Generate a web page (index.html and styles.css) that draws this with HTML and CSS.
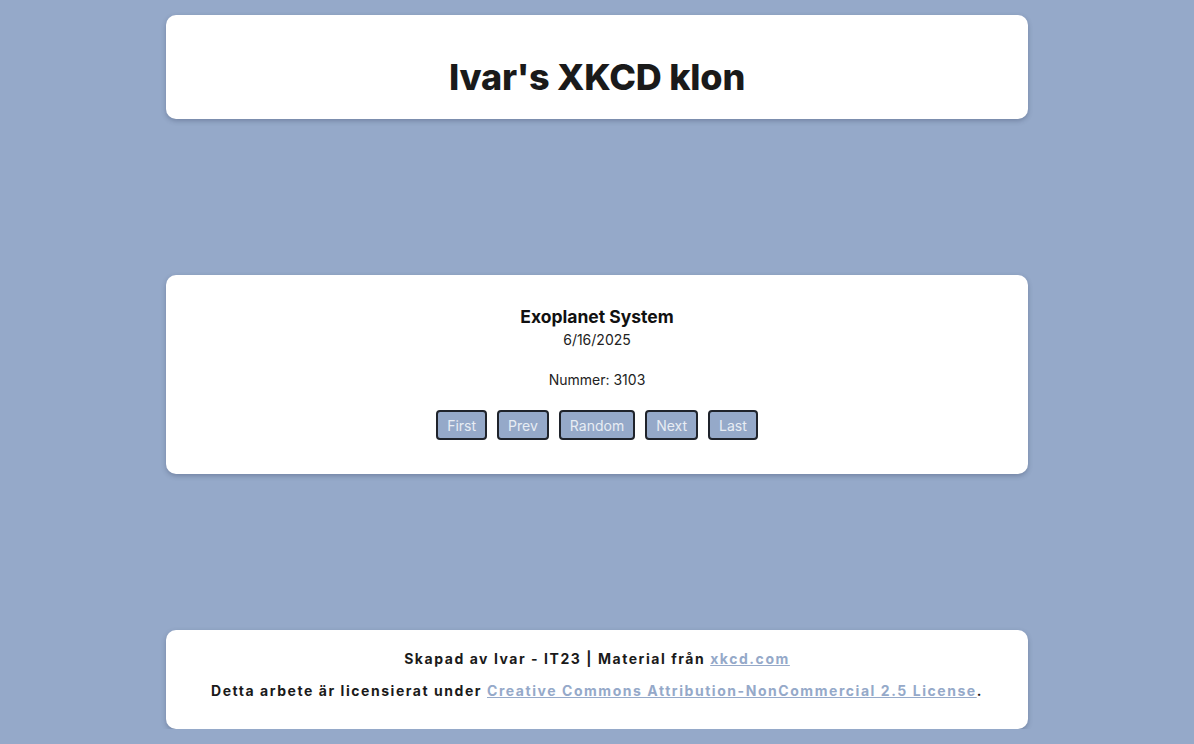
FILE: index.html
```html
<!DOCTYPE html>
<html lang="sv">
<head>
<meta charset="utf-8">
<title>Ivar's XKCD klon</title>
<link rel="stylesheet" href="styles.css">
</head>
<body>
<div class="page">
  <header class="card header">
    <h1 class="title">Ivar's XKCD klon</h1>
  </header>
  <main class="card comic">
    <h2 class="comic-title">Exoplanet System</h2>
    <p class="comic-date">6/16/2025</p>
    <p class="comic-num">Nummer: 3103</p>
    <div class="nav">
      <button class="btn">First</button>
      <button class="btn">Prev</button>
      <button class="btn">Random</button>
      <button class="btn">Next</button>
      <button class="btn">Last</button>
    </div>
  </main>
  <footer class="card footer">
    <p class="foot-line">Skapad av Ivar - IT23 | Material från <a href="#" class="link">xkcd.com</a></p>
    <p class="foot-line">Detta arbete är licensierat under <a href="#" class="link">Creative Commons Attribution-NonCommercial 2.5 License</a>.</p>
  </footer>
</div>
</body>
</html>
```

FILE: styles.css
```css
html, body {
  margin: 0;
  padding: 0;
}
body {
  background: #95a9c9;
  font-family: Inter, "Noto Sans", sans-serif;
  color: #111;
}
.page {
  width: 862px;
  margin: 0 auto;
  padding-top: 15px;
  display: flex;
  flex-direction: column;
  gap: 156px;
}
.card {
  background: #fff;
  border-radius: 10px;
  box-shadow: 0 2px 5px rgba(40, 50, 80, 0.3);
}
.header {
  height: 104px;
  display: flex;
  align-items: center;
  justify-content: center;
}
.title {
  margin: 0;
  padding-top: 20px;
  font-size: 36px;
  font-weight: 800;
  letter-spacing: -0.2px;
  color: #1a1a1a;
}
.comic {
  height: 199px;
  box-sizing: border-box;
  padding-top: 31px;
  display: flex;
  flex-direction: column;
  align-items: center;
}
.comic-title {
  margin: 0;
  font-size: 17.5px;
  font-weight: 700;
  line-height: 21px;
}
.comic-date {
  margin: 4px 0 0;
  font-size: 14px;
  line-height: 18px;
  color: #222;
}
.comic-num {
  margin: 22px 0 0;
  font-size: 14px;
  line-height: 18px;
  color: #222;
}
.nav {
  margin-top: 21px;
  display: flex;
  gap: 10px;
}
.btn {
  height: 30px;
  padding: 0 9px;
  background: #95a9c9;
  border: 2px solid #1f232b;
  border-radius: 4px;
  color: #e8edf4;
  font-family: Inter, "Noto Sans", sans-serif;
  font-size: 14px;
}
.footer {
  height: 99px;
  box-sizing: border-box;
  padding-top: 19px;
  display: flex;
  flex-direction: column;
  align-items: center;
  gap: 13px;
}
.foot-line {
  margin: 0;
  font-size: 14px;
  font-weight: 700;
  letter-spacing: 1.55px;
  line-height: 19px;
  color: #1a1a1a;
}
.link {
  color: #95a9c9;
}
```
